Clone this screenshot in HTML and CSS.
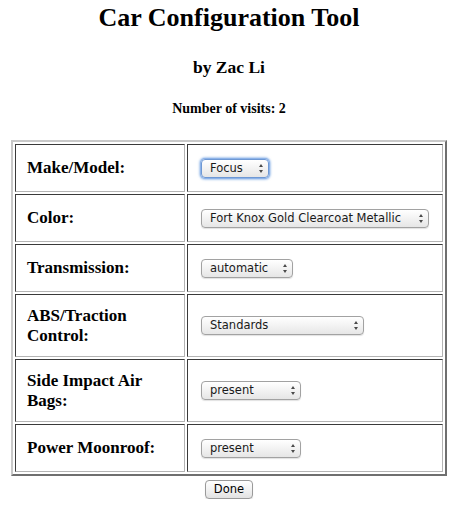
FILE: index.html
```html
<!DOCTYPE html>
<html lang="en">
<head>
<meta charset="utf-8">
<title>Car Configuration Tool</title>
<link rel="stylesheet" href="styles.css">
</head>
<body>
<div class="page">
  <h1 class="title">Car Configuration Tool</h1>
  <h2 class="byline">by Zac Li</h2>
  <p class="visits">Number of visits: 2</p>
  <form class="config">
    <table class="config-table">
      <tr class="row">
        <td class="label">Make/Model:</td>
        <td class="field"><span class="picker"><select class="sel w-make focused"><option>Focus</option><option>Fiesta</option></select></span></td>
      </tr>
      <tr class="row">
        <td class="label">Color:</td>
        <td class="field"><span class="picker"><select class="sel w-color"><option>Fort Knox Gold Clearcoat Metallic</option></select></span></td>
      </tr>
      <tr class="row">
        <td class="label">Transmission:</td>
        <td class="field"><span class="picker"><select class="sel w-trans"><option>automatic</option><option>manual</option></select></span></td>
      </tr>
      <tr class="row row-tall">
        <td class="label">ABS/Traction Control:</td>
        <td class="field"><span class="picker"><select class="sel w-abs"><option>Standards</option></select></span></td>
      </tr>
      <tr class="row row-tall">
        <td class="label">Side Impact Air Bags:</td>
        <td class="field"><span class="picker"><select class="sel w-opt"><option>present</option><option>absent</option></select></span></td>
      </tr>
      <tr class="row">
        <td class="label">Power Moonroof:</td>
        <td class="field"><span class="picker"><select class="sel w-opt"><option>present</option><option>absent</option></select></span></td>
      </tr>
    </table>
    <div class="actions"><button class="done" type="button">Done</button></div>
  </form>
</div>
</body>
</html>
```

FILE: styles.css
```css
html, body {
  margin: 0;
  padding: 0;
  background: #ffffff;
}

body {
  font-family: "Liberation Serif", "Times New Roman", serif;
  color: #000;
}

.page {
  padding-top: 2px;
  text-align: center;
}

.title {
  margin: 0;
  font-size: 26px;
  line-height: 32px;
  font-weight: bold;
}

.byline {
  margin: 23px 0 0;
  font-size: 17.5px;
  line-height: 20px;
  font-weight: bold;
}

.visits {
  margin: 24px 0 0;
  font-size: 14px;
  line-height: 16px;
  font-weight: bold;
}

.config {
  margin: 0;
}

.config-table {
  margin: 23px auto 0;
  width: 436px;
  border-collapse: separate;
  border-spacing: 2px;
  border-style: solid;
  border-width: 2px;
  border-color: #c9c9c9 #6f6f6f #6f6f6f #c9c9c9;
  text-align: left;
}

.row {
  height: 48px;
}

.row-tall {
  height: 63px;
}

.config-table td {
  border-style: solid;
  border-width: 1px;
  border-color: #3a3a3a #b4b4b4 #b4b4b4 #3a3a3a;
  vertical-align: middle;
  padding: 0 11px;
}

.label {
  width: 146px;
  font-size: 17px;
  line-height: 19.5px;
  font-weight: bold;
}

.picker {
  display: block;
  position: relative;
  width: max-content;
  margin-left: 2px;
}

.picker::before,
.picker::after {
  content: "";
  position: absolute;
  right: 6px;
  width: 0;
  height: 0;
  border-left: 2.5px solid transparent;
  border-right: 2.5px solid transparent;
  pointer-events: none;
}

.picker::before {
  top: 5px;
  border-bottom: 3px solid #4a4a4a;
}

.picker::after {
  top: 11px;
  border-top: 3px solid #4a4a4a;
}

.sel {
  display: block;
  -webkit-appearance: none;
  appearance: none;
  box-sizing: border-box;
  height: 19px;
  margin: 0;
  padding: 0 18px 0 8px;
  font-family: "DejaVu Sans", "Lucida Grande", sans-serif;
  font-size: 11.5px;
  line-height: 17px;
  color: #1a1a1a;
  border: 1px solid #a2a2a2;
  border-radius: 4px;
  background: linear-gradient(#ffffff, #f4f4f4 45%, #e6e6e6);
  box-shadow: 0 1px 1px rgba(0, 0, 0, 0.12);
  outline: none;
}

.sel.focused {
  border-color: #6e98d4;
  box-shadow: 0 0 0 1px #8db3e8, 0 0 2px 2px rgba(110, 160, 225, 0.55);
}

.w-make { width: 68px; }
.w-color { width: 228px; }
.w-trans { width: 92px; }
.w-abs { width: 163px; }
.w-opt { width: 100px; }

.actions {
  text-align: center;
  margin-top: 3px;
}

.done {
  -webkit-appearance: none;
  appearance: none;
  box-sizing: border-box;
  height: 19px;
  width: 48px;
  padding: 0;
  font-family: "DejaVu Sans", "Lucida Grande", sans-serif;
  font-size: 11.5px;
  line-height: 17px;
  color: #000;
  border: 1px solid #9a9a9a;
  border-radius: 4px;
  background: linear-gradient(#ffffff, #f2f2f2 50%, #e2e2e2);
  box-shadow: 0 1px 1px rgba(0, 0, 0, 0.12);
}
```
